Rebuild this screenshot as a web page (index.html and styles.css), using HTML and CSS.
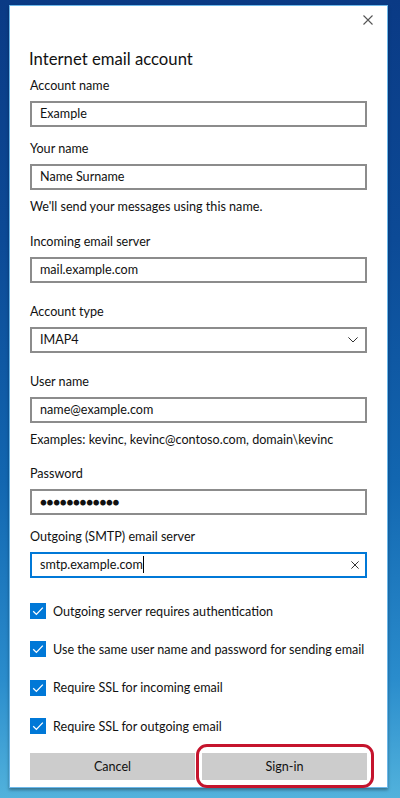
FILE: index.html
```html
<!DOCTYPE html>
<html>
<head>
	<title>Internet email account</title>
	<meta charset="utf-8">
	<meta name="viewport" content="width=device-width,initial-scale=1.0">
	<link rel="stylesheet" href="styles.css">
</head>
<body>
<div class="dialog">
	<div class="close-row">
		<svg class="close" width="10" height="10" viewBox="0 0 10 10"><path d="M0.5 0.5L9.5 9.5M9.5 0.5L0.5 9.5" stroke="#555" stroke-width="1.1" fill="none"/></svg>
	</div>
	<h1 class="title">Internet email account</h1>

	<div class="field f-first">
		<div class="label">Account name</div>
		<div class="input">Example</div>
	</div>

	<div class="field f-near">
		<div class="label">Your name</div>
		<div class="input">Name Surname</div>
		<div class="hint">We'll send your messages using this name.</div>
	</div>

	<div class="field f-after-hint">
		<div class="label">Incoming email server</div>
		<div class="input">mail.example.com</div>
	</div>

	<div class="field f-far">
		<div class="label">Account type</div>
		<div class="input select">
			<span>IMAP4</span>
			<svg width="10" height="6" viewBox="0 0 10 6"><path d="M0.4 0.4L5 5L9.6 0.4" stroke="#333" stroke-width="1" fill="none"/></svg>
		</div>
	</div>

	<div class="field f-far">
		<div class="label">User name</div>
		<div class="input">name@example.com</div>
		<div class="hint">Examples: kevinc, kevinc@contoso.com, domain\kevinc</div>
	</div>

	<div class="field f-pass">
		<div class="label">Password</div>
		<div class="input password">&#9679;&#9679;&#9679;&#9679;&#9679;&#9679;&#9679;&#9679;&#9679;&#9679;&#9679;&#9679;</div>
	</div>

	<div class="field f-mid">
		<div class="label">Outgoing (SMTP) email server</div>
		<div class="input focused">
			<span>smtp.example.com<i class="caret"></i></span>
			<svg width="8" height="8" viewBox="0 0 8 8"><path d="M0.4 0.4L7.6 7.6M7.6 0.4L0.4 7.6" stroke="#333" stroke-width="1" fill="none"/></svg>
		</div>
	</div>

	<div class="checks">
		<div class="check"><span class="box"><svg width="16" height="16" viewBox="0 0 16 16"><path d="M3.2 8.2L6.4 11.4L12.8 4.6" stroke="#fff" stroke-width="1.3" fill="none"/></svg></span>Outgoing server requires authentication</div>
		<div class="check"><span class="box"><svg width="16" height="16" viewBox="0 0 16 16"><path d="M3.2 8.2L6.4 11.4L12.8 4.6" stroke="#fff" stroke-width="1.3" fill="none"/></svg></span>Use the same user name and password for sending email</div>
		<div class="check"><span class="box"><svg width="16" height="16" viewBox="0 0 16 16"><path d="M3.2 8.2L6.4 11.4L12.8 4.6" stroke="#fff" stroke-width="1.3" fill="none"/></svg></span>Require SSL for incoming email</div>
		<div class="check"><span class="box"><svg width="16" height="16" viewBox="0 0 16 16"><path d="M3.2 8.2L6.4 11.4L12.8 4.6" stroke="#fff" stroke-width="1.3" fill="none"/></svg></span>Require SSL for outgoing email</div>
	</div>

	<div class="buttons">
		<div class="btn">Cancel</div>
		<div class="btn btn-main">Sign-in<span class="ring"></span></div>
	</div>
</div>
</body>
</html>
```

FILE: styles.css
```css
html, body {
	margin: 0;
	padding: 0;
}
body {
	width: 400px;
	height: 798px;
	overflow: hidden;
	background: linear-gradient(180deg, #0a3a85 0%, #0c4a96 30%, #1266b0 60%, #2a8ccc 85%, #52b2dc 100%);
	font-family: Lato, "Liberation Sans", sans-serif;
	color: #111;
	white-space: nowrap;
}
.dialog {
	box-sizing: border-box;
	margin: 5px 0 0 9px;
	width: 379px;
	height: 783px;
	background: #fff;
	border: 1px solid #6db8ea;
	box-shadow: 0 2px 3px rgba(0, 0, 0, 0.35);
	padding: 0 20px;
}
.close-row {
	display: flex;
	justify-content: flex-end;
	padding-top: 9px;
	margin-right: -6px;
	height: 10px;
}
.title {
	margin: 22px 0 0 -1px;
	font-size: 16.7px;
	line-height: 24px;
	font-weight: 400;
	color: #111;
}
.field {
	display: flex;
	flex-direction: column;
}
.f-first { margin-top: 6px; }
.f-near { margin-top: 13px; }
.f-after-hint { margin-top: 17px; }
.f-far { margin-top: 20px; }
.f-pass { margin-top: 16px; }
.f-mid { margin-top: 13px; }

.label {
	font-size: 12.6px;
	line-height: 18px;
	margin-bottom: 6px;
}
.input {
	box-sizing: border-box;
	height: 26px;
	border: 2px solid #8c8c8c;
	padding: 0 8px;
	font-size: 12.6px;
	line-height: 22px;
	display: flex;
	align-items: center;
	justify-content: space-between;
}
.select svg {
	margin-right: -1px;
}
.password {
	font-size: 11.5px;
	letter-spacing: -0.3px;
}
.focused {
	border-color: #0078d7;
}
.focused svg {
	margin-right: -2px;
}
.caret {
	display: inline-block;
	width: 1px;
	height: 17px;
	background: #000;
	vertical-align: -4px;
}
.hint {
	font-size: 12.6px;
	line-height: 18px;
	margin-top: 8px;
}
.checks {
	margin-top: 22px;
	display: flex;
	flex-direction: column;
	gap: 16.4px;
}
.check {
	display: flex;
	align-items: center;
	height: 22px;
	font-size: 12.6px;
}
.box {
	width: 16px;
	height: 16px;
	background: #0078d7;
	margin-right: 7px;
	flex: none;
}
.box svg {
	display: block;
}
.buttons {
	margin-top: 16px;
	display: grid;
	grid-template-columns: 1fr 1fr;
	gap: 7px;
}
.btn {
	height: 27px;
	background: #cccccc;
	font-size: 12.6px;
	line-height: 27px;
	text-align: center;
	position: relative;
}
.ring {
	position: absolute;
	left: -6px;
	right: -7px;
	top: -9px;
	bottom: -8px;
	border: 3px solid #c5142d;
	border-radius: 11px;
}
```
